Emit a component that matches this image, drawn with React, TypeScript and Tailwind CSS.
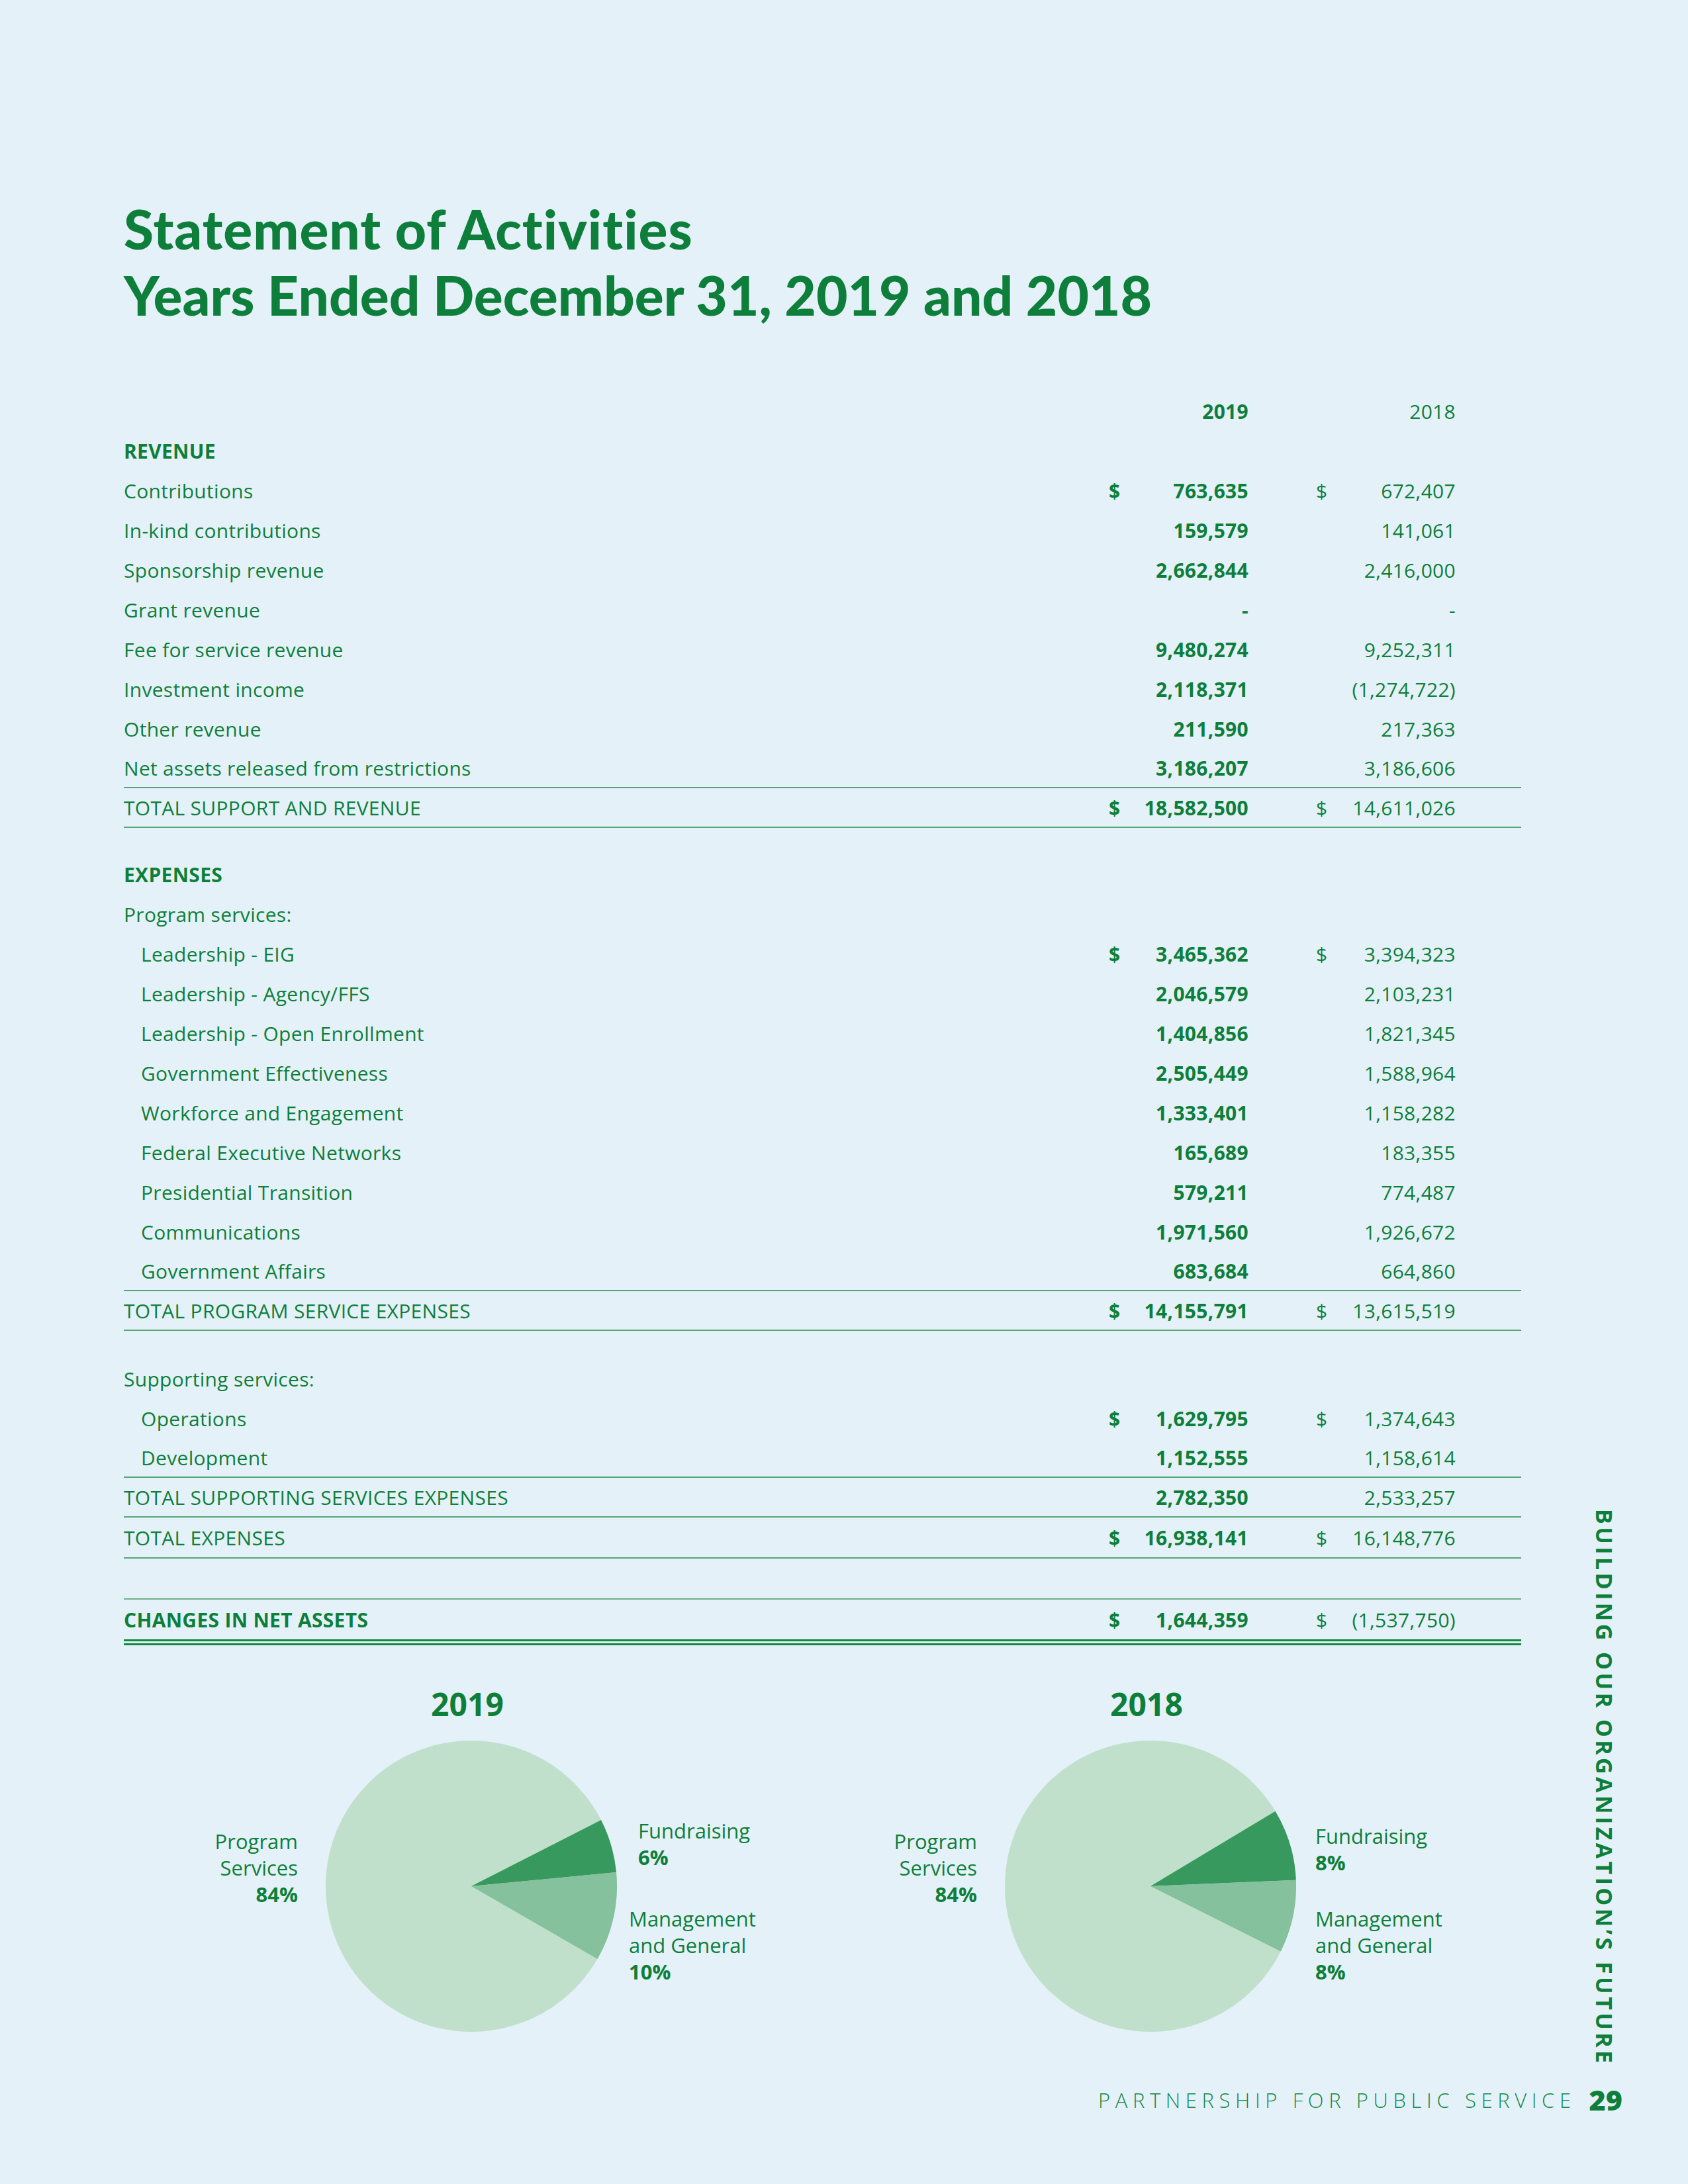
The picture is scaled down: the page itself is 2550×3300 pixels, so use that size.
type Row = {
  label?: string;
  a?: string;
  b?: string;
  dollar?: boolean;
  indent?: boolean;
  head?: boolean;
  line?: boolean;
  h?: string;
};

const revenue: Row[] = [
  { label: 'Contributions', a: '763,635', b: '672,407', dollar: true },
  { label: 'In-kind contributions', a: '159,579', b: '141,061' },
  { label: 'Sponsorship revenue', a: '2,662,844', b: '2,416,000' },
  { label: 'Grant revenue', a: '-', b: '-' },
  { label: 'Fee for service revenue', a: '9,480,274', b: '9,252,311' },
  { label: 'Investment income', a: '2,118,371', b: '(1,274,722)' },
  { label: 'Other revenue', a: '211,590', b: '217,363' },
  { label: 'Net assets released from restrictions', a: '3,186,207', b: '3,186,606', line: true },
  { label: 'TOTAL SUPPORT AND REVENUE', a: '18,582,500', b: '14,611,026', dollar: true, line: true },
];

const program: Row[] = [
  { label: 'Program services:' },
  { label: 'Leadership - EIG', a: '3,465,362', b: '3,394,323', dollar: true, indent: true },
  { label: 'Leadership - Agency/FFS', a: '2,046,579', b: '2,103,231', indent: true },
  { label: 'Leadership - Open Enrollment', a: '1,404,856', b: '1,821,345', indent: true },
  { label: 'Government Effectiveness', a: '2,505,449', b: '1,588,964', indent: true },
  { label: 'Workforce and Engagement', a: '1,333,401', b: '1,158,282', indent: true },
  { label: 'Federal Executive Networks', a: '165,689', b: '183,355', indent: true },
  { label: 'Presidential Transition', a: '579,211', b: '774,487', indent: true },
  { label: 'Communications', a: '1,971,560', b: '1,926,672', indent: true },
  { label: 'Government Affairs', a: '683,684', b: '664,860', indent: true, line: true },
  { label: 'TOTAL PROGRAM SERVICE EXPENSES', a: '14,155,791', b: '13,615,519', dollar: true, line: true },
];

const supporting: Row[] = [
  { label: 'Supporting services:' },
  { label: 'Operations', a: '1,629,795', b: '1,374,643', dollar: true, indent: true },
  { label: 'Development', a: '1,152,555', b: '1,158,614', indent: true, line: true },
  { label: 'TOTAL SUPPORTING SERVICES EXPENSES', a: '2,782,350', b: '2,533,257', line: true },
  { label: 'TOTAL EXPENSES', a: '16,938,141', b: '16,148,776', dollar: true, line: true, h: 'h-[62px]' },
];

function TableRow({ r }: { r: Row }) {
  return (
    <div
      className={`flex items-center pr-[99px] ${r.h ?? 'h-[60px]'} ${
        r.line ? 'border-b-2 border-[#55a675]' : ''
      }`}
    >
      <div className={`flex-1 ${r.indent ? 'pl-[26px]' : ''} ${r.head ? 'font-bold' : ''}`}>{r.label}</div>
      <div className="flex w-[211px] justify-between font-bold">
        <span>{r.dollar ? '$' : ''}</span>
        <span>{r.a}</span>
      </div>
      <div className="ml-[102px] flex w-[211px] justify-between">
        <span>{r.dollar ? '$' : ''}</span>
        <span>{r.b}</span>
      </div>
    </div>
  );
}

function slice(a1: number, a2: number) {
  const r = 220;
  const p = (a: number) => [r * Math.cos((a * Math.PI) / 180), r * Math.sin((a * Math.PI) / 180)];
  const [x1, y1] = p(a1);
  const [x2, y2] = p(a2);
  return `M0 0 L${x1.toFixed(1)} ${y1.toFixed(1)} A${r} ${r} 0 0 1 ${x2.toFixed(1)} ${y2.toFixed(1)} Z`;
}

type ChartProps = {
  year: string;
  fund: string;
  mgmt: string;
  angles: [number, number, number];
  fundTop: string;
  mgmtTop: string;
  fundLeft: string;
  mgmtLeft: string;
};

function Chart({ year, fund, mgmt, angles, fundTop, mgmtTop, fundLeft, mgmtLeft }: ChartProps) {
  return (
    <div className="flex items-start text-[31px] font-medium leading-[40px]">
      <div className="w-[263px] pt-[211px] text-right">
        <div>Program</div>
        <div>Services</div>
        <div className="font-bold">84%</div>
      </div>
      <div className="ml-[42px] flex w-[440px] flex-col items-center">
        <div className="pr-[12px] text-[48px] font-bold leading-[48px]">{year}</div>
        <svg width={440} height={440} viewBox="-220 -220 440 440" className="mt-[31px]">
          <circle cx={0} cy={0} r={220} fill="#c0e0cc" />
          <path d={slice(angles[0], angles[1])} fill="#37995d" />
          <path d={slice(angles[1], angles[2])} fill="#84c19c" />
        </svg>
      </div>
      <div className="w-[276px]">
        <div className={`${fundTop} ${fundLeft}`}>
          <div>Fundraising</div>
          <div className="font-bold">{fund}</div>
        </div>
        <div className={`${mgmtTop} ${mgmtLeft}`}>
          <div>Management</div>
          <div>and General</div>
          <div className="font-bold">{mgmt}</div>
        </div>
      </div>
    </div>
  );
}

export default function App() {
  return (
    <div className="flex h-[3300px] w-[2550px] flex-col bg-[#e4f1f8] font-['Open_Sans',sans-serif] text-[#0e7f3a]">
      <h1 className="pl-[187px] pt-[295px] font-['Lato',sans-serif] text-[82px] font-black leading-[100px] [font-variant-ligatures:none]">
        <span className="block tracking-[1px]">Statement of Activities</span>
        <span className="block">Years Ended December 31, 2019 and 2018</span>
      </h1>

      <div className="mt-[96px] flex">
        <div className="w-[2298px] pl-[187px] text-[30px] font-medium tracking-[0.3px]">
          <div className="flex h-[60px] items-center pr-[99px]">
            <div className="flex-1" />
            <div className="w-[211px] text-right font-bold">2019</div>
            <div className="ml-[102px] w-[211px] text-right">2018</div>
          </div>
          <TableRow r={{ label: 'REVENUE', head: true }} />
          {revenue.map((r) => (
            <TableRow key={r.label} r={r} />
          ))}

          <div className="mt-[40px]">
            <TableRow r={{ label: 'EXPENSES', head: true }} />
            {program.map((r) => (
              <TableRow key={r.label} r={r} />
            ))}
          </div>

          <div className="mt-[42px]">
            {supporting.map((r) => (
              <TableRow key={r.label} r={r} />
            ))}
          </div>

          <div className="h-[62px] border-b-2 border-[#6cb187] pr-[99px]" />
          <div className="flex h-[60px] items-center pr-[99px] font-bold">
            <div className="flex-1">CHANGES IN NET ASSETS</div>
            <div className="flex w-[211px] justify-between">
              <span>$</span>
              <span>1,644,359</span>
            </div>
            <div className="ml-[102px] flex w-[211px] justify-between font-medium">
              <span>$</span>
              <span>(1,537,750)</span>
            </div>
          </div>
          <div className="h-[9px] border-y-[3px] border-[#148a3e]" />

          {/* Pie charts */}
          <div className="mt-[65px] flex gap-[5px] tracking-normal">
            <Chart
              year="2019"
              fund="6%"
              mgmt="10%"
              angles={[-27, -5.5, 30]}
              fundTop="pt-[195px]"
              mgmtTop="mt-[53px]"
              fundLeft="pl-[32px]"
              mgmtLeft="pl-[18px]"
            />
            <Chart
              year="2018"
              fund="8%"
              mgmt="8%"
              angles={[-31, -2.4, 26.6]}
              fundTop="pt-[203px]"
              mgmtTop="mt-[45px]"
              fundLeft="pl-[29px]"
              mgmtLeft="pl-[29px]"
            />
          </div>
        </div>

        <div className="flex-1 pl-[109px] pt-[1689px]">
          <div className="text-[34px] font-bold leading-[34px] tracking-[4.4px] [writing-mode:vertical-rl]">
            BUILDING OUR ORGANIZATION’S FUTURE
          </div>
        </div>
      </div>

      <div className="mb-[97px] mt-auto flex h-[60px] items-center justify-end pr-[99px]">
        <span className="text-[31px] font-light tracking-[7.6px] text-[#158a45]">PARTNERSHIP FOR PUBLIC SERVICE</span>
        <span className="ml-[20px] text-[43px] font-black">29</span>
      </div>
    </div>
  );
}
